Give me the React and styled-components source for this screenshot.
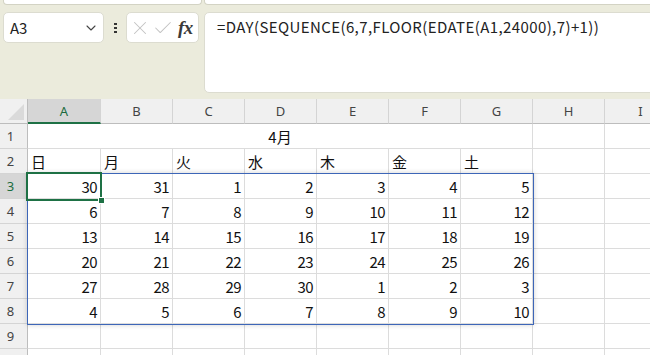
import styled, { createGlobalStyle } from "styled-components";
import { ChevronDown, X, Check } from "lucide-react";

const ROW_HEAD = 28;
const COL_W = 72;
const HEAD_H = 25;
const ROW_H = 25;

const GlobalStyle = createGlobalStyle`
    html, body {
        margin: 0;
        padding: 0;
        background: #ffffff;
        overflow: hidden;
    }
    body {
        font-family: "Noto Sans CJK JP", "Noto Sans", sans-serif;
    }
`

const Page = styled.div`
    width: 650px;
    height: 355px;
    overflow: hidden;
    background: #ffffff;
`

const Ribbon = styled.div`
    display: flex;
    gap: 2px;
    height: 5px;
    background: #ebebdc;
    padding: 0 0 0 3px;
`

const RibbonPanel = styled.div`
    width: ${p => p.$width || "auto"};
    flex: ${p => p.$width ? "none" : "1"};
    height: 4px;
    background: #ffffff;
    border: 1px solid #d3d3c4;
    border-top: none;
    border-radius: 0 0 4px 4px;
    margin-right: ${p => p.$width ? "0" : "-6px"};
`

const FormulaArea = styled.div`
    display: flex;
    align-items: flex-start;
    background: #ebebdc;
    padding: 7px 0 7px 3px;
    height: 80px;
`

const Box = styled.div`
    box-sizing: border-box;
    height: 31px;
    background: #ffffff;
    border: 1px solid #dcdcd0;
    border-radius: 5px;
    display: flex;
    align-items: center;
`

const NameBox = styled(Box)`
    width: 101px;
    padding: 0 4px 0 6px;
    justify-content: space-between;
    font-size: 15px;
    color: #222;

    svg {
        color: #444;
    }
`

const Dots = styled.div`
    width: 22px;
    height: 31px;
    display: flex;
    flex-direction: column;
    align-items: center;
    justify-content: center;
    gap: 2px;

    span {
        width: 3px;
        height: 2px;
        background: #333;
    }
`

const EditBox = styled(Box)`
    width: 73px;
    padding: 0 4px 0 2px;
    gap: 1px;

    svg {
        color: #c2c2c2;
        flex: none;
    }
`

const Fx = styled.span`
    font-family: "Liberation Serif", "DejaVu Serif", serif;
    font-style: italic;
    font-size: 19px;
    font-weight: bold;
    color: #3a3a3a;
    letter-spacing: -0.5px;
    margin-left: 3px;
    line-height: 1;
`

const FormulaBar = styled(Box)`
    flex: 1;
    height: 81px;
    margin-left: 5px;
    margin-right: -8px;
    align-items: flex-start;
    padding: 3px 12px;
    font-size: 15px;
    color: #222;
    letter-spacing: 0.4px;
`

const Sheet = styled.div`
    position: relative;
`

const Grid = styled.div`
    display: grid;
    grid-template-columns: ${ROW_HEAD}px ${COL_W + 1}px repeat(8, ${COL_W}px);
    grid-template-rows: ${HEAD_H}px;
    grid-auto-rows: ${ROW_H}px;
    font-size: 15px;
    color: #111;
`

const Corner = styled.div`
    background: #f0f0f0;
    border-right: 1px solid #bdbdbd;
    border-bottom: 1px solid #bdbdbd;
    display: flex;
    align-items: flex-end;
    justify-content: flex-end;
    padding: 0 3px 3px 0;
`

const ColHeader = styled.div`
    box-sizing: border-box;
    background: ${p => p.$selected ? "#d6d6d6" : "#f0f0f0"};
    color: ${p => p.$selected ? "#1b6b3e" : "#444"};
    border-right: 1px solid #d4d4d4;
    border-bottom: ${p => p.$selected ? "2px solid #1e7145" : "1px solid #bdbdbd"};
    display: flex;
    align-items: center;
    justify-content: center;
    font-family: "Noto Sans", sans-serif;
    font-size: 13px;
`

const RowHeader = styled.div`
    box-sizing: border-box;
    background: ${p => p.$selected ? "#d6d6d6" : "#f0f0f0"};
    color: ${p => p.$selected ? "#1b6b3e" : "#444"};
    border-right: 1px solid #bdbdbd;
    border-bottom: 1px solid #d4d4d4;
    display: flex;
    align-items: center;
    justify-content: center;
    padding-right: 6px;
    font-family: "Noto Sans", sans-serif;
    font-size: 13px;
`

const Cell = styled.div`
    box-sizing: border-box;
    border-right: 1px solid #dcdcdc;
    border-bottom: 1px solid #dcdcdc;
    display: flex;
    align-items: center;
    justify-content: ${p => p.$align === "left" ? "flex-start" : "flex-end"};
    padding: 0 3px 0 3px;
    letter-spacing: -0.6px;
    white-space: nowrap;
`

const TitleCell = styled(Cell)`
    grid-column: span 7;
    justify-content: center;
    letter-spacing: 0;
`

const SpillOutline = styled.div`
    position: absolute;
    border: 1px solid #3d66b8;
    box-shadow: 0 0 5px rgba(0, 0, 0, 0.18);
    pointer-events: none;
`

const Selection = styled.div`
    position: absolute;
    border: 2px solid #1e7145;
    pointer-events: none;
`

const FillHandle = styled.div`
    position: absolute;
    right: -5px;
    bottom: -5px;
    width: 5px;
    height: 5px;
    background: #1e7145;
    border: 1px solid #ffffff;
`

const COLS = ["A", "B", "C", "D", "E", "F", "G", "H", "I"];
const DAYS = ["日", "月", "火", "水", "木", "金", "土"];
const DATA = [
    [30, 31, 1, 2, 3, 4, 5],
    [6, 7, 8, 9, 10, 11, 12],
    [13, 14, 15, 16, 17, 18, 19],
    [20, 21, 22, 23, 24, 25, 26],
    [27, 28, 29, 30, 1, 2, 3],
    [4, 5, 6, 7, 8, 9, 10],
];

const App = () => {
    const rowTop = r => HEAD_H + (r - 1) * ROW_H;

    return (
        <Page>
            <GlobalStyle />
            <Ribbon>
                <RibbonPanel $width="197px" />
                <RibbonPanel />
            </Ribbon>
            <FormulaArea>
                <NameBox>
                    <span>A3</span>
                    <ChevronDown size={16} strokeWidth={1.6} />
                </NameBox>
                <Dots><span /><span /><span /></Dots>
                <EditBox>
                    <X size={22} strokeWidth={1.1} />
                    <Check size={22} strokeWidth={1.1} />
                    <Fx>fx</Fx>
                </EditBox>
                <FormulaBar>=DAY(SEQUENCE(6,7,FLOOR(EDATE(A1,24000),7)+1))</FormulaBar>
            </FormulaArea>
            <Sheet>
                <Grid>
                    <Corner>
                        <svg width="16" height="16" viewBox="0 0 16 16">
                            <polygon points="16,0 16,16 0,16" fill="#dadada" />
                        </svg>
                    </Corner>
                    {COLS.map(c => <ColHeader key={c} $selected={c === "A"}>{c}</ColHeader>)}

                    <RowHeader>1</RowHeader>
                    <TitleCell>4月</TitleCell>
                    <Cell />
                    <Cell />

                    <RowHeader>2</RowHeader>
                    {DAYS.map(d => <Cell key={d} $align="left">{d}</Cell>)}
                    <Cell />
                    <Cell />

                    {DATA.map((row, i) => (
                        <>
                            <RowHeader key={"h" + i} $selected={i === 0}>{i + 3}</RowHeader>
                            {row.map((n, j) => <Cell key={i + "-" + j}>{n}</Cell>)}
                            <Cell />
                            <Cell />
                        </>
                    ))}

                    <RowHeader>9</RowHeader>
                    {COLS.map(c => <Cell key={"9" + c} />)}
                    <RowHeader />
                    {COLS.map(c => <Cell key={"10" + c} />)}
                </Grid>
                <SpillOutline
                    style={{
                        left: ROW_HEAD - 1,
                        top: rowTop(3) - 1,
                        width: COL_W * 7 + 1,
                        height: ROW_H * 6,
                    }}
                />
                <Selection
                    style={{
                        left: ROW_HEAD - 2,
                        top: rowTop(3) - 2,
                        width: COL_W,
                        height: ROW_H,
                    }}
                >
                    <FillHandle />
                </Selection>
            </Sheet>
        </Page>
    )
}

export default App;
